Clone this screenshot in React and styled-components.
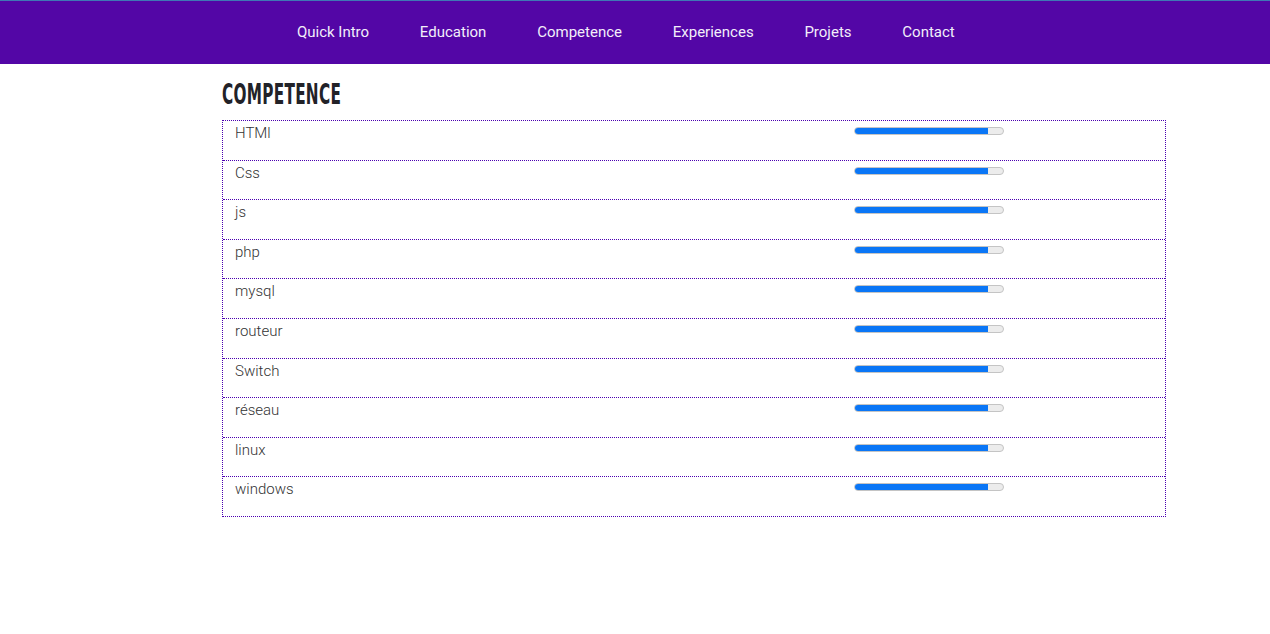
import React from 'react'
import styled, { createGlobalStyle } from 'styled-components';

const skills = ['HTMl', 'Css', 'js', 'php', 'mysql', 'routeur', 'Switch', 'réseau', 'linux', 'windows'];
const links = ['Quick Intro', 'Education', 'Competence', 'Experiences', 'Projets', 'Contact'];

const App = () => {
    return (
        <>
            <GlobalStyle />
            <NavBar>
                <NavList>
                    {links.map((l) => (
                        <NavLink key={l}>{l}</NavLink>
                    ))}
                </NavList>
            </NavBar>
            <Section>
                <Title>Competence</Title>
                <SkillTable>
                    {skills.map((s) => (
                        <SkillRow key={s}>
                            <SkillName>{s}</SkillName>
                            <SkillCell>
                                <Bar>
                                    <Fill style={{ width: '90%' }} />
                                </Bar>
                            </SkillCell>
                        </SkillRow>
                    ))}
                </SkillTable>
            </Section>
        </>
    );
};

export default App;


const GlobalStyle = createGlobalStyle`
  body {
    margin: 0;
    background: #fff;
    font-family: Roboto, "Liberation Sans", sans-serif;
  }
`;

const NavBar = styled.nav`
  height: 63px;
  background: #5306a6;
  border-top: 1px solid #3f78b5;
`;

const NavList = styled.ul`
  display: flex;
  align-items: center;
  height: 100%;
  margin: 0;
  padding: 0 0 0 271.5px;
  list-style: none;
`;

const NavLink = styled.li`
  padding: 0 25.4px;
  color: #f2eefa;
  font-size: 15px;
  line-height: 1;
  margin-top: -1px;
`;

const Section = styled.section`
  padding: 17px 0 0 222px;
  width: 944px;
`;

const Title = styled.h2`
  margin: 0 0 12px;
  font-family: "DejaVu Sans Condensed", "DejaVu Sans", sans-serif;
  font-weight: bold;
  font-size: 29px;
  line-height: 27px;
  text-transform: uppercase;
  color: #222228;
  transform: scaleX(0.585);
  transform-origin: left center;
  letter-spacing: 0.5px;
`;

const SkillTable = styled.div`
  border: 1px dotted #4a00b0;
`;

const SkillRow = styled.div`
  display: grid;
  grid-template-columns: 619px 1fr;
  height: 38.6px;
  & + & {
    border-top: 1px dotted #4a00b0;
  }
`;

const SkillName = styled.div`
  padding: 3px 12px 0;
  font-size: 15px;
  font-weight: 300;
  color: #333;
`;

const SkillCell = styled.div`
  padding: 6px 12px 0;
`;

const Bar = styled.div`
  width: 148px;
  height: 6px;
  border: 1px solid #c4c4c4;
  border-radius: 4px;
  background: #ececec;
  overflow: hidden;
`;

const Fill = styled.div`
  height: 100%;
  background: #0a76f6;
`;
